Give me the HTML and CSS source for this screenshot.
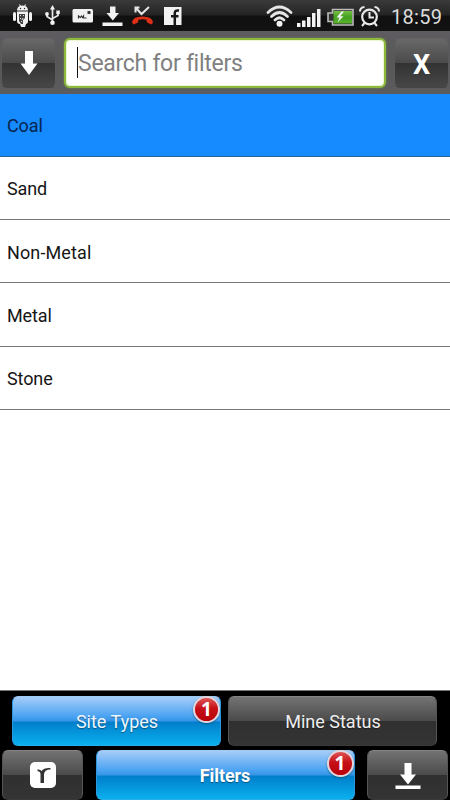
FILE: index.html
```html
<!DOCTYPE html>
<html lang="en">
<head>
<meta charset="utf-8">
<title>Filters</title>
<link rel="stylesheet" href="styles.css">
</head>
<body>
<div class="screen">
  <header class="status">
    <svg class="status-icons" width="190" height="31" viewBox="0 0 190 31" fill="#f2f2f2">
      <g>
        <path d="M17 10.500Q17.300 6.800 20 6L18.800 4.800L19.600 4.300L21 5.700Q22.500 5.300 24 5.700L25.400 4.300L26.200 4.800L25 6Q27.700 6.800 28 10.500Z"/>
        <rect x="13" y="12" width="3" height="9" rx="1.500"/>
        <rect x="29" y="12" width="3" height="9" rx="1.500"/>
        <path d="M17 11.500h11v10q0 2-2 2.500l-1 3h-4l-1-3q-3 0-3-3z"/>
        <circle cx="20.500" cy="8.500" r=".7" fill="#222"/><circle cx="24.500" cy="8.500" r=".7" fill="#222"/>
        <path d="M19 14h6v4l-2 2v4h-2l-2-3z" fill="#444"/>
        <path d="M20 15l1 1m2-1l1 1m-4 2l1 1m2-1l-1 2m-1 1l1 1" stroke="#ddd" stroke-width="1"/>
      </g>
      <g>
        <path d="M52.500 8v14M52.500 20l-5.500-3.500V14M52.500 18.500l5.500-3V12" fill="none" stroke="#e8e8e8" stroke-width="1.700"/>
        <path d="M50 9.500L52.500 5L55 9.500z"/><circle cx="52.500" cy="22.700" r="2.300"/>
        <circle cx="47" cy="14" r="1.900"/><rect x="56.300" y="10.500" width="3.500" height="3.500"/>
      </g>
      <g>
        <rect x="72.500" y="9" width="20.500" height="13.500" rx="1.500"/>
        <rect x="87.500" y="11" width="3" height="3" fill="#333"/>
        <path d="M78.500 18.500v-2.500l2 1.500l1-1.500l1 1.500l1-1.500v2h3" fill="none" stroke="#333" stroke-width="1.200"/>
      </g>
      <path d="M110 6.500h5.500v6.500h3.500l-6.200 7.500L106.500 13h3.500zM102.500 22.500h20v3.500h-20z"/>
      <path d="M135.500 12.500V7.500h4M136 8l5.500 6L149 7" fill="none" stroke="#e5e5e5" stroke-width="2"/>
      <path d="M132 22.500Q132.500 16.500 142.500 16.500T153 22.500L151.500 24.500L147 22.500L146.500 19.800Q142.500 18.800 138.500 19.800L138 22.500L133.500 24.500Z" fill="#df2f17"/>
      <rect x="164" y="7" width="17.500" height="18"/>
      <path d="M174.800 25V12.800q0-2.800 4.200-2.300M171 16.300h7.500" fill="none" stroke="#191919" stroke-width="2.500"/>
    </svg>
    <svg class="system-icons" width="120" height="31" viewBox="264 0 120 31" fill="#f2f2f2">
      <g fill="none" stroke="#e6e6e6" stroke-width="2.700" stroke-linecap="round">
        <path d="M268 12.500Q279.500 1.500 291 12.500M271.500 16.500Q279.500 8.500 287.500 16.500M275 20Q279.500 15.500 284 20"/>
      </g>
      <circle cx="279.500" cy="23.800" r="3"/>
      <path d="M297 23h3.500v4H297zM302 20.500h3.500V27H302zM307 17h3.500v10H307zM312 13h3.500v14H312zM317 9h3.500v18H317z"/>
      <path d="M332.500 9.500H353v15.500h-20.500V21.500h-4.500V13h4.500z" fill="#333" stroke="#bcbcbc" stroke-width="1.600"/>
      <path d="M333.500 11h18.500v12.500h-18.500z" fill="url(#cell)"/>
      <path d="M341.500 11.500L336.500 17.500h3L337.500 22.500L343.500 16.300h-3.200L344 11.500z"/>
      <circle cx="369.500" cy="17" r="7.300" fill="none" stroke="#e9e9e9" stroke-width="2.200"/>
      <path d="M369.500 12v5.500h4.500M360 11.500q0-4 4.500-4.500M379 11.500q0-4-4.500-4.500M364.500 23l-2.500 3M374.500 23l2.500 3" fill="none" stroke="#e9e9e9" stroke-width="2"/>
      <defs><linearGradient id="cell" x2="0" y2="1"><stop offset="0" stop-color="#76c043"/><stop offset=".5" stop-color="#43a01f"/><stop offset="1" stop-color="#58b42b"/></linearGradient></defs>
    </svg>
    <span class="clock">18:59</span>
  </header>

  <div class="toolbar">
    <button class="btn tool"><svg width="18" height="26" viewBox="0 0 18 26"><path d="M5 1h8v12.500h4.500L9 25 .5 13.500H5z" fill="#fff"/></svg></button>
    <div class="search"><span class="caret"></span><span class="placeholder">Search for filters</span></div>
    <button class="btn tool close">X</button>
  </div>

  <ul class="list">
    <li class="row selected">Coal</li>
    <li class="row">Sand</li>
    <li class="row wide">Non-Metal</li>
    <li class="row">Metal</li>
    <li class="row">Stone</li>
  </ul>

  <footer class="bottom">
    <div class="tabs">
      <button class="btn blue"><span class="site">Site Types</span><i class="badge">1</i></button>
      <button class="btn"><span class="mine">Mine Status</span></button>
    </div>
    <div class="nav">
      <button class="btn"><svg width="26" height="26" viewBox="0 0 26 26"><rect width="26" height="26" rx="5" fill="#fff"/><path d="M10.500 21V12Q10.500 9.500 7.500 9V7.500Q10.500 7 11.500 9Q14 5.500 20.500 6V7.500Q14.300 7.500 14 12.500V21Z" fill="#333"/></svg></button>
      <button class="btn blue"><b class="filters">Filters</b><i class="badge">1</i></button>
      <button class="btn"><svg class="download" width="26" height="26" viewBox="0 0 26 26"><path d="M9.500 0h7v11.500H21L13 21.500 5 11.500h4.500zM.5 22.500h25v3.500H.5z" fill="#fff"/></svg></button>
    </div>
  </footer>
</div>
</body>
</html>
```

FILE: styles.css
```css
* { box-sizing: border-box; }
body { margin: 0; font-family: Roboto, "Liberation Sans", sans-serif; }
.screen {
  width: 450px;
  height: 800px;
  display: flex;
  flex-direction: column;
  overflow: hidden;
  background: #fff;
}
.status {
  flex: none;
  height: 31px;
  display: flex;
  align-items: center;
  background: linear-gradient(#3a3a3a, #242424 48%, #101010 52%, #121212);
}
.status svg { flex: none; }
.system-icons { margin-left: 74px; }
.clock {
  margin: 2px 0 0 7px;
  color: #dcdcdc;
  font-size: 20px;
  line-height: 24px;
  letter-spacing: .3px;
}
.toolbar {
  flex: none;
  height: 62.5px;
  display: grid;
  grid-template-columns: 55px 322px 55px;
  column-gap: 8px;
  padding: 6.5px 0 0 1px;
  background: linear-gradient(#5e5c60, #575759 50%, #5c5c5e);
}
.btn {
  position: relative;
  display: flex;
  align-items: center;
  justify-content: center;
  padding: 0;
  border: 1px solid #555;
  border-top-color: #858585;
  border-bottom-color: #393939;
  border-radius: 6px;
  background: linear-gradient(#737373, #4b4b4b 49%, #303030 51%, #343434);
  color: #eee;
  font: 18px Roboto, "Liberation Sans", sans-serif;
  white-space: nowrap;
}
.tool {
  height: 50px;
  border-color: #646464 #5a5a5a #444;
  background: linear-gradient(#686868, #4b4b4b 49%, #333 51%, #474747);
}
.close { color: #fff; font-size: 27px; font-weight: 700; padding: 4px 0 0; }
.search {
  height: 50px;
  display: flex;
  align-items: center;
  padding-left: 11px;
  border: 2px solid #8db83c;
  border-radius: 6px;
  background: #fff;
  box-shadow: inset 0 0 2px #b7dc6b, 0 0 2px #7c9b42;
}
.caret { width: 1px; height: 31px; background: #111; }
.placeholder { padding-top: 2px; color: #808080; font-size: 23px; line-height: 30px; letter-spacing: -.28px; white-space: nowrap; }
.list { flex: 1; margin: 0; padding: 0; list-style: none; background: #fff; }
.row {
  height: 63.3px;
  display: flex;
  align-items: center;
  padding: 1px 0 0 7px;
  border-bottom: 1px solid #777;
  color: #161616;
  font-size: 18px;
  letter-spacing: -.1px;
}
.wide { letter-spacing: .12px; padding-top: 2px; }
.selected { background: #168aff; color: #07244d; border-color: #2b6295; }
.bottom {
  flex: none;
  height: 110px;
  padding-top: 5px;
  border-top: 1px solid #777;
  background: #000;
}
.tabs {
  display: grid;
  grid-template-columns: 209px 209px;
  column-gap: 7px;
  height: 50px;
  padding-left: 12px;
}
.nav {
  display: grid;
  grid-template-columns: 81px 259px 81px;
  column-gap: 12.500px;
  height: 50px;
  margin-top: 4px;
  padding-left: 2px;
}
.blue {
  border-color: #9dccf4 #2b99e0 #28aee8;
  background: linear-gradient(#a6ccf8, #4ba3f2 40%, #3796e8 49%, #007fcb 53%, #0bb0ee);
  color: #eef7ff;
}
.site, .filters, .mine { text-shadow: 0 1px 1px #0006; }
.site, .mine { padding-left: 1px; }
.filters { color: #fff; letter-spacing: -.1px; }
.download { margin-top: 2px; }
.badge {
  position: absolute;
  top: -1px;
  right: 0;
  width: 27px;
  height: 27px;
  border: 2px solid #e2d5dc;
  border-radius: 50%;
  background: linear-gradient(#df5656, #c60f17 45%, #b9000a);
  box-shadow: 0 1px 2px #0448;
  color: #fff;
  font: 700 19px/23px "Open Sans", sans-serif;
  text-align: center;
}
```
